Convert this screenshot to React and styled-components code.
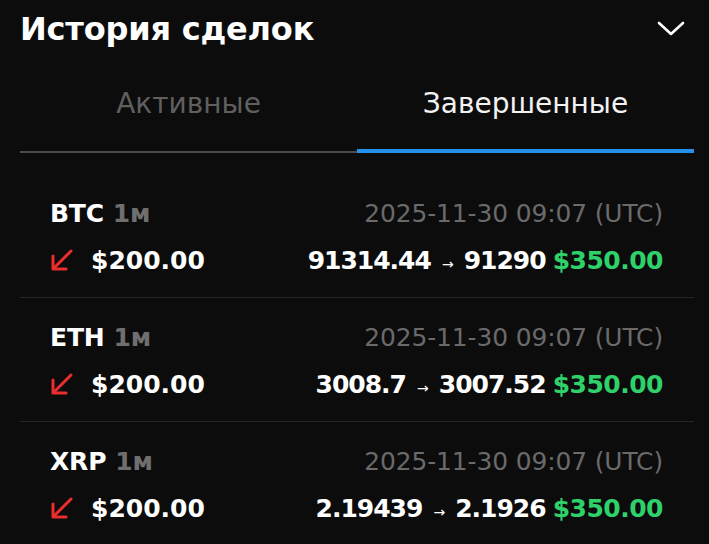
import React from "react";
import styled, { createGlobalStyle } from "styled-components";

const Global = createGlobalStyle`
  html, body { margin: 0; padding: 0; background: #0c0c0c; }
  body { font-family: "DejaVu Sans", "Noto Sans", sans-serif; color: #fff; }
`;

const Page = styled.div`
  width: 709px;
  height: 544px;
  overflow: hidden;
  background: #0c0c0c;
  padding: 0 15px 0 20px;
  box-sizing: border-box;
`;

const Header = styled.div`
  display: flex;
  align-items: center;
  justify-content: space-between;
  height: 58px;
  padding-right: 8px;
`;

const Title = styled.h1`
  margin: 0;
  font-size: 32px;
  line-height: 40px;
  font-weight: 700;
  letter-spacing: -0.2px;
`;

const Tabs = styled.div`
  display: grid;
  grid-template-columns: 1fr 1fr;
  align-items: end;
  margin-top: 16px;
`;

const Tab = styled.div`
  text-align: center;
  font-size: 28px;
  line-height: 34px;
  font-weight: 400;
  color: ${(p) => (p.$active ? "#f2f2f2" : "#5f5f5f")};
  padding: 13px 0 ${(p) => (p.$active ? "28px" : "30px")};
  border-bottom: ${(p) => (p.$active ? "4px solid #2492ec" : "2px solid #4a4a4a")};
`;

const List = styled.div`
  padding-top: 21px;
`;

const Row = styled.div`
  padding: 23px 31px 21px 30px;
  border-bottom: 1px solid #252525;
  display: flex;
  flex-direction: column;
  gap: 15px;
`;

const Line = styled.div`
  display: flex;
  align-items: center;
  justify-content: space-between;
  height: 32px;
`;

const Pair = styled.div`
  display: flex;
  align-items: baseline;
  gap: 9px;
  font-size: 25px;
  font-weight: 700;
  letter-spacing: -0.2px;
`;

const Period = styled.span`
  color: #6f6f6f;
  font-weight: 700;
`;

const DateText = styled.div`
  font-size: 24.9px;
  font-weight: 400;
  letter-spacing: -0.1px;
  color: #6a6a6a;
`;

const Amount = styled.div`
  display: flex;
  align-items: center;
  gap: 17px;
  font-size: 25px;
  font-weight: 700;
`;

const Prices = styled.div`
  display: flex;
  align-items: baseline;
  gap: 7px;
  font-size: 25px;
  font-weight: 700;
  letter-spacing: -1px;
`;

const Arrow = styled.span`
  font-size: 14px;
  font-weight: 400;
  margin: 0 4px;
`;

const Profit = styled.span`
  color: #2fd26a;
  font-weight: 700;
  letter-spacing: -0.5px;
`;

const Chevron = () => (
  <svg width="30" height="20" viewBox="0 0 30 20" fill="none">
    <path d="M3 4 L15 15 L27 4" stroke="#fff" strokeWidth="2.6" strokeLinecap="round" strokeLinejoin="round" />
  </svg>
);

const DownLeft = () => (
  <svg width="24" height="24" viewBox="0 0 24 24" fill="none">
    <path d="M21 3 L4 20" stroke="#ec2d2d" strokeWidth="3" strokeLinecap="round" />
    <path d="M3 8 V21 H16" stroke="#ec2d2d" strokeWidth="3" strokeLinecap="round" strokeLinejoin="round" />
  </svg>
);

const trades = [
  { sym: "BTC", from: "91314.44", to: "91290" },
  { sym: "ETH", from: "3008.7", to: "3007.52" },
  { sym: "XRP", from: "2.19439", to: "2.1926" },
];

export default function App() {
  return (
    <Page>
      <Global />
      <Header>
        <Title>История сделок</Title>
        <Chevron />
      </Header>
      <Tabs>
        <Tab>Активные</Tab>
        <Tab $active>Завершенные</Tab>
      </Tabs>
      <List>
        {trades.map((t) => (
          <Row key={t.sym}>
            <Line>
              <Pair>
                {t.sym}
                <Period>1м</Period>
              </Pair>
              <DateText>2025-11-30 09:07 (UTC)</DateText>
            </Line>
            <Line>
              <Amount>
                <DownLeft />
                $200.00
              </Amount>
              <Prices>
                {t.from}
                <Arrow>→</Arrow>
                {t.to}
                <Profit>$350.00</Profit>
              </Prices>
            </Line>
          </Row>
        ))}
      </List>
    </Page>
  );
}
